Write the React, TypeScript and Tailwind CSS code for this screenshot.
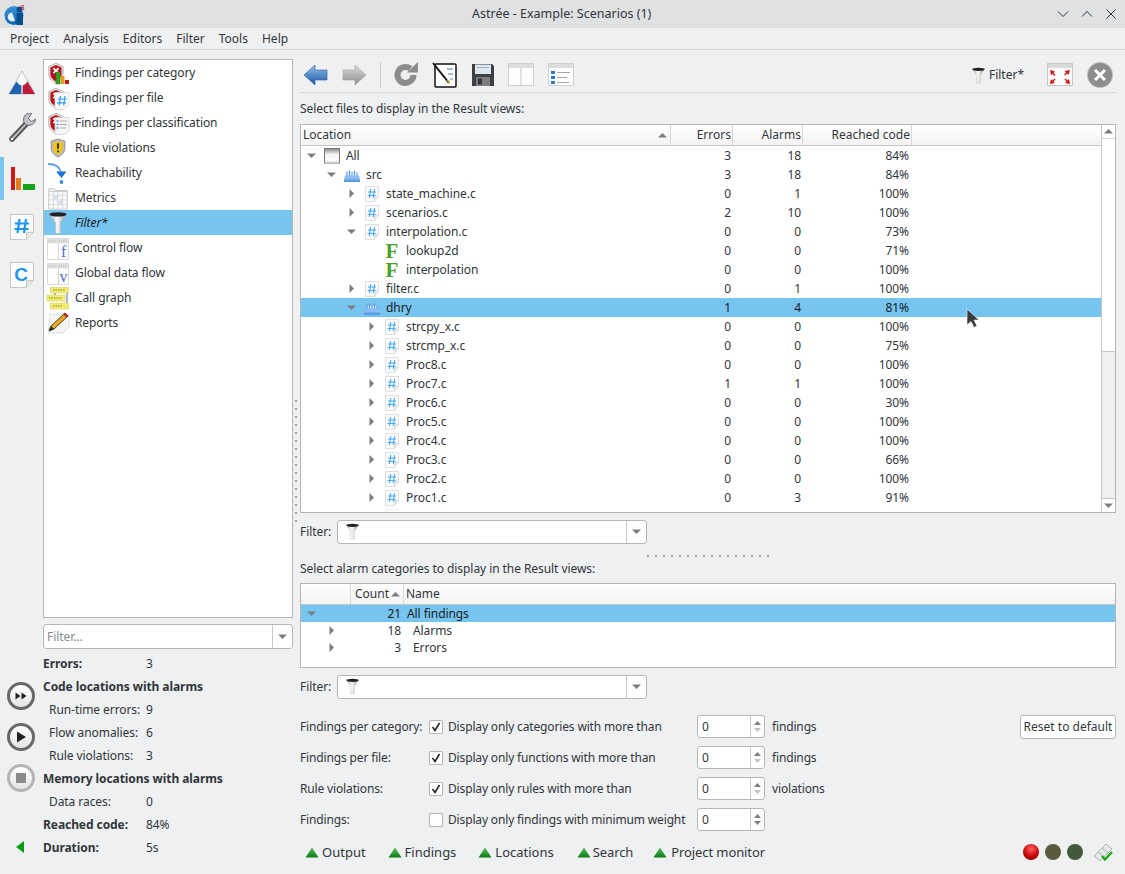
import React from "react";

const Tri = ({ d = "down", c = "#7b7e81" }: { d?: "down" | "right" | "up"; c?: string }) => (
  <svg width="9" height="9" viewBox="0 0 9 9" className="shrink-0">
    {d === "down" && <path d="M0 2.5h9L4.5 7z" fill={c} />}
    {d === "up" && <path d="M0 6.5h9L4.5 2z" fill={c} />}
    {d === "right" && <path d="M2.5 0v9L7 4.5z" fill={c} />}
  </svg>
);

const Funnel = ({ s = 24 }: { s?: number }) => (
  <svg width={s} height={s} viewBox="0 0 24 24">
    <defs>
      <linearGradient id="fn" x1="0" x2="1" y1="0" y2="0">
        <stop offset="0" stopColor="#a8aaaa" />
        <stop offset="0.45" stopColor="#fafafa" />
        <stop offset="1" stopColor="#8a8c8c" />
      </linearGradient>
    </defs>
    <path d="M3 2h18l-6.500 10v10.500h-5V12z" fill="url(#fn)" stroke="#b0b2b2" strokeWidth="0.500" />
    <ellipse cx="12" cy="3.400" rx="8.500" ry="2.200" fill="#222" />
  </svg>
);

const HashDoc = ({ s = 16, w = 1 }: { s?: number; w?: number }) => (
  <svg width={s} height={s} viewBox="0 0 16 16" className="shrink-0">
    <path d="M1.500.5h13v10l-4 5h-9z" fill="#fbfbfb" stroke="#dfe0e1" />
    <path d="M10.500 15.500v-5h4" fill="#e8e8e8" stroke="#d0d1d2" strokeWidth="0.700" />
    <path d="M6.800 3 5.400 12M10.600 3 9.200 12M4 6h8M3.600 9.400h8" stroke="#3aa5f5" strokeWidth={w} fill="none" />
  </svg>
);

const Folder = () => (
  <svg width="16" height="16" viewBox="0 0 16 16" className="shrink-0">
    <path d="M3 9V4.500M5.500 9V3.500M8 9V5M10.500 9V3.500M13 9V5.500" stroke="#4f96e4" strokeWidth="1.300" />
    <path d="M4.200 9V5.500M6.800 9V5.500M9.200 9V6M11.800 9V5.500" stroke="#e5f0fb" strokeWidth="1.100" />
    <path d="M1 8.500h14l1 4V15H0v-2.500z" fill="#8abcf0" />
    <rect x="0" y="12.500" width="16" height="2.500" fill="#5a9ce6" />
  </svg>
);

const WinIcon = () => (
  <svg width="16" height="16" viewBox="0 0 16 16" className="shrink-0">
    <defs>
      <linearGradient id="wi" x1="0" x2="0" y1="0" y2="1"><stop offset="0" stopColor="#85878a" /><stop offset="0.4" stopColor="#f4f4f4" /><stop offset="1" stopColor="#ffffff" /></linearGradient>
    </defs>
    <rect x="0.500" y="0.500" width="15" height="14.500" fill="url(#wi)" stroke="#77797b" />
    <rect x="1" y="13.500" width="14" height="1.500" fill="#cfd0d1" />
  </svg>
);

const FIcon = () => (
  <span className="flex h-[16px] w-[16px] shrink-0 items-center justify-center font-['Liberation_Serif',serif] text-[21px] font-bold leading-[16px] tracking-normal text-[#4aa02c]">F</span>
);

const Shield = () => (
  <g transform="translate(1.500 1) scale(1.300)">
    <path d="M1 3.500 6.500 1 12 3.500v6c0 3.200-2.500 5.400-5.500 7-3-1.600-5.500-3.800-5.500-7z" fill="#e6e7e7" stroke="#8f9090" strokeWidth="0.500" />
    <path d="M2.200 4.300 6.500 2.300l4.300 2v5.200c0 2.500-1.900 4.200-4.300 5.600-2.400-1.400-4.300-3.100-4.300-5.600z" fill="#bb1019" />
    <path d="M4.500 4.800 8.500 8.600M8.500 4.800 4.500 8.600" stroke="#fff" strokeWidth="1.400" />
  </g>
);

const ShieldBars = () => (
  <svg width="24" height="24" viewBox="0 0 24 24">
    <Shield />
    <rect x="10" y="11" width="4" height="12" fill="#35a024" stroke="#1d7014" strokeWidth="0.400" />
    <rect x="14.500" y="15" width="4" height="8" fill="#dca020" />
    <rect x="19" y="19" width="4" height="4" fill="#bf1a1a" />
  </svg>
);

const ShieldFile = () => (
  <svg width="24" height="24" viewBox="0 0 24 24">
    <Shield />
    <path d="M9 6.500h14v12l-5 5H9z" fill="#f8f8f8" stroke="#d6d7d8" strokeWidth="0.800" />
    <path d="M14.500 10 13.200 19.500M19 10 17.700 19.500M11.700 13h9M11 16.800h9" stroke="#2a9df4" strokeWidth="1.200" fill="none" />
  </svg>
);

const ShieldList = () => (
  <svg width="24" height="24" viewBox="0 0 24 24">
    <Shield />
    <path d="M9 6.500h14v13l-4 4H9z" fill="#f5f5f5" stroke="#cfd0d1" strokeWidth="0.800" />
    <path d="M14 10h7M14 13.500h7M14 17h6" stroke="#a9aaab" strokeWidth="1" />
    <path d="M10.500 10h2M10.500 13.500h2M10.500 17h2" stroke="#4f93d8" strokeWidth="1.600" />
  </svg>
);

const RuleShield = () => (
  <svg width="24" height="24" viewBox="-2 -2 28 28">
    <path d="M12 1.500 20 4v8c0 5-3.700 8.300-8 10.500C7.700 20.300 4 17 4 12V4z" fill="#bcbcbc" stroke="#6e6e6e" strokeWidth="0.800" />
    <path d="M12 4l5.600 1.800V12c0 3.600-2.600 6-5.600 7.800-3-1.800-5.600-4.200-5.600-7.800V5.800z" fill="#f2c416" />
    <path d="M12 6.500v6.500M12 15v2" stroke="#222" strokeWidth="2" />
  </svg>
);

const Reach = () => (
  <svg width="24" height="24" viewBox="0 0 24 24">
    <path d="M2 3c7 0 12 3 13 9" stroke="#5aa0ee" strokeWidth="1.800" fill="none" />
    <path d="M10 10.500h10.500L15.500 17z" fill="#1f6fd6" />
    <circle cx="15.500" cy="21" r="1.900" fill="#3e8ee8" />
  </svg>
);

const MetricIcon = () => (
  <svg width="24" height="24" viewBox="-1 -1 26 26">
    <path d="M2 2h6l1.500 2H22v20H2z" fill="#fafafa" stroke="#bcbdbe" />
    <path d="M3 9h18M3 14h18M3 19h18M7 5v18M12 5v18M17 5v18" stroke="#cfd0d1" strokeWidth="0.800" />
    <path d="M2.500 5h19" stroke="#c6c7c8" />
    <rect x="7.500" y="9.500" width="4" height="4" fill="#cfe0f3" />
    <rect x="12.500" y="14.500" width="4" height="4" fill="#cfe0f3" />
  </svg>
);

const FlowIcon = ({ l }: { l: string }) => (
  <svg width="24" height="24" viewBox="0 0 24 24" className="overflow-visible">
    <rect x="1.500" y="2.500" width="21" height="21" fill="#fdfdfd" stroke="#dcdcdd" />
    <rect x="2" y="3" width="20" height="4.500" fill="#dedfe0" />
    <path d="M3 5h7M13 5h8" stroke="#a8a9aa" strokeWidth="0.800" strokeDasharray="1 1" />
    <path d="M12.500 7.500v16" stroke="#d4d5d6" />
    <text x="17.500" y="21" textAnchor="middle" fontFamily="Liberation Serif, serif" fontSize="16" fill="#4e6fd0">{l}</text>
  </svg>
);

const CallGraph = () => (
  <svg width="24" height="24" viewBox="0 0 24 24">
    <path d="M9 7v6M21 5v13" stroke="#6f86c9" strokeWidth="1.200" />
    <rect x="4.500" y="1.500" width="18" height="5.500" fill="#f3ee6a" stroke="#c9c76a" strokeWidth="0.500" />
    <rect x="1" y="9" width="18" height="6" fill="#f3ee6a" stroke="#c9c76a" strokeWidth="0.500" />
    <rect x="4.500" y="17" width="18" height="6" fill="#f3ee6a" stroke="#c9c76a" strokeWidth="0.500" />
    <path d="M7 4h12M3 12h13M7 20h9" stroke="#7a7a4a" strokeWidth="1" strokeDasharray="1.500 1" />
  </svg>
);

const Pencil = () => (
  <svg width="24" height="24" viewBox="0 0 24 24">
    <path d="M4 3h19v13l-6 6H2z" fill="#f4f4f4" stroke="#d6d7d8" strokeWidth="0.800" />
    <path d="M19 2 22 5 8 18l-5 2 2-5z" fill="#e7a81d" stroke="#222" strokeWidth="0.800" />
    <path d="M19 2 22 5 20.500 6.500 17.500 3.500z" fill="#cf1f1f" />
    <path d="M5 15 8 18l-5 2z" fill="#2a2a2a" />
  </svg>
);

const RailTriangle = () => (
  <svg width="28" height="26" viewBox="0 0 28 26">
    <path d="M14 1 27 24H1z" fill="#fdfdfd" stroke="#9c9d9e" strokeWidth="0.600" />
    <path d="M8.500 11.500C10 14 12 15 13.400 15.400V24H1z" fill="#1f63ae" />
    <path d="M19.500 11.500C18 14 16 15 14.600 15.400V24H27z" fill="#bd1f3a" />
  </svg>
);

const Wrench = () => (
  <svg width="28" height="30" viewBox="0 0 28 30">
    <path d="M4 26 19 10" stroke="#4f5052" strokeWidth="5.500" strokeLinecap="round" />
    <path d="M4 26 19 10" stroke="#b9babb" strokeWidth="2" strokeLinecap="round" />
    <path d="M22 0c-5 .5-7.500 4.500-6 9.500l2.500 2.500c5 1.500 8.500-1.500 9.500-6l-4.500 2.500-3-3 3-5z" fill="#c2c3c4" stroke="#55565a" strokeWidth="0.800" />
    <circle cx="4" cy="26" r="1.300" fill="#fff" />
  </svg>
);

const RailBars = () => (
  <svg width="26" height="26" viewBox="0 0 26 26">
    <rect x="0" y="1" width="4" height="23" fill="#d21616" />
    <rect x="5" y="12" width="5" height="12" fill="#de7f1f" />
    <rect x="12" y="18" width="12" height="6" fill="#16a016" />
  </svg>
);

const RailDoc = ({ children }: { children: React.ReactNode }) => (
  <svg width="24" height="26" viewBox="0 0 24 26">
    <path d="M.5.5h23v18l-7 7H.500z" fill="#fcfcfc" stroke="#c7c8c9" />
    <path d="M16.500 25.500v-7h7" fill="#e8e8e8" stroke="#c7c8c9" />
    {children}
  </svg>
);

const Round = ({ kind }: { kind: "ff" | "play" | "stop" }) => (
  <div className={"flex h-[28px] w-[28px] items-center justify-center rounded-full border-[3px] bg-gradient-to-b from-white to-[#e4e4e4] " + (kind === "stop" ? "border-[#b4b5b6]" : "border-[#67686a]")}>
    <svg width="14" height="14" viewBox="0 0 14 14">
      {kind === "ff" && <path d="M1.500 3.500v7L6.500 7zM7.500 3.500v7l5-3.500z" fill="#222" />}
      {kind === "play" && <path d="M3 1.500v11L12 7z" fill="#222" />}
      {kind === "stop" && <rect x="2" y="2" width="10" height="10" fill="#8a8b8c" />}
    </svg>
  </div>
);

const navItems: [string, React.ReactNode][] = [
  ["Findings per category", <ShieldBars />],
  ["Findings per file", <ShieldFile />],
  ["Findings per classification", <ShieldList />],
  ["Rule violations", <RuleShield />],
  ["Reachability", <Reach />],
  ["Metrics", <MetricIcon />],
  ["Filter*", <Funnel />],
  ["Control flow", <FlowIcon l="f" />],
  ["Global data flow", <FlowIcon l="v" />],
  ["Call graph", <CallGraph />],
  ["Reports", <Pencil />],
];

type Row = { d: number; a?: "down" | "right"; i: "win" | "dir" | "hash" | "f"; n: string; e?: string; al?: string; r?: string; sel?: boolean };

const rows: Row[] = [
  { d: 0, a: "down", i: "win", n: "All", e: "3", al: "18", r: "84%" },
  { d: 1, a: "down", i: "dir", n: "src", e: "3", al: "18", r: "84%" },
  { d: 2, a: "right", i: "hash", n: "state_machine.c", e: "0", al: "1", r: "100%" },
  { d: 2, a: "right", i: "hash", n: "scenarios.c", e: "2", al: "10", r: "100%" },
  { d: 2, a: "down", i: "hash", n: "interpolation.c", e: "0", al: "0", r: "73%" },
  { d: 3, i: "f", n: "lookup2d", e: "0", al: "0", r: "71%" },
  { d: 3, i: "f", n: "interpolation", e: "0", al: "0", r: "100%" },
  { d: 2, a: "right", i: "hash", n: "filter.c", e: "0", al: "1", r: "100%" },
  { d: 2, a: "down", i: "dir", n: "dhry", e: "1", al: "4", r: "81%", sel: true },
  { d: 3, a: "right", i: "hash", n: "strcpy_x.c", e: "0", al: "0", r: "100%" },
  { d: 3, a: "right", i: "hash", n: "strcmp_x.c", e: "0", al: "0", r: "75%" },
  { d: 3, a: "right", i: "hash", n: "Proc8.c", e: "0", al: "0", r: "100%" },
  { d: 3, a: "right", i: "hash", n: "Proc7.c", e: "1", al: "1", r: "100%" },
  { d: 3, a: "right", i: "hash", n: "Proc6.c", e: "0", al: "0", r: "30%" },
  { d: 3, a: "right", i: "hash", n: "Proc5.c", e: "0", al: "0", r: "100%" },
  { d: 3, a: "right", i: "hash", n: "Proc4.c", e: "0", al: "0", r: "100%" },
  { d: 3, a: "right", i: "hash", n: "Proc3.c", e: "0", al: "0", r: "66%" },
  { d: 3, a: "right", i: "hash", n: "Proc2.c", e: "0", al: "0", r: "100%" },
  { d: 3, a: "right", i: "hash", n: "Proc1.c", e: "0", al: "3", r: "91%" },
];

const indent = ["pl-[6px]", "pl-[26px]", "pl-[46px]", "pl-[66px]"];

const Combo = () => (
  <div className="flex h-[24px] w-[310px] items-center rounded-[3px] border border-[#b4b6b8] bg-white">
    <div className="flex flex-1 items-center pl-[6px]"><Funnel s={17} /></div>
    <div className="flex h-full w-[20px] items-center justify-center border-l border-[#c8cacb]"><Tri /></div>
  </div>
);

const Spin = ({ dim }: { dim?: boolean }) => (
  <div className="flex h-[23px] w-[68px] items-center rounded-[3px] border border-[#b4b6b8] bg-white pl-[4px]">
    <span className="flex-1">0</span>
    <div className="flex h-full w-[14px] flex-col items-center justify-center border-l border-[#c8cacb]">
      <svg width="9" height="15" viewBox="0 0 9 15">
        <path d="M1 6 4.500 2 8 6z" fill="#7b7e81" />
        <path d="M1 9 4.500 13 8 9z" fill={dim ? "#c0c2c4" : "#7b7e81"} />
      </svg>
    </div>
  </div>
);

const Check = ({ on }: { on: boolean }) => (
  <div className="flex h-[14px] w-[14px] shrink-0 items-center justify-center rounded-[1px] border border-[#b4b6b8] bg-white">
    {on && (
      <svg width="10" height="10" viewBox="0 0 10 10"><path d="M1.500 5 4 8.500 8.500 1" stroke="#232629" strokeWidth="1.600" fill="none" /></svg>
    )}
  </div>
);

const FormRow = ({ label, on, text, suffix, last, dim }: { label: string; on: boolean; text: string; suffix?: string; last?: React.ReactNode; dim?: boolean }) => (
  <div className="flex h-[31px] items-center tracking-[-0.15px]">
    <span className="w-[129px]">{label}</span>
    <Check on={on} />
    <span className="ml-[5px] w-[249px]">{text}</span>
    <Spin dim={dim} />
    <span className="ml-[7px] flex-1">{suffix}</span>
    {last}
  </div>
);

const Up = () => (
  <svg width="14" height="11" viewBox="0 0 14 11" className="shrink-0">
    <defs>
      <linearGradient id="gu" x1="0" x2="0" y1="0" y2="1"><stop offset="0" stopColor="#58c058" /><stop offset="1" stopColor="#0c7a14" /></linearGradient>
    </defs>
    <path d="M7 0.500 13.500 10.500H.500z" fill="url(#gu)" />
  </svg>
);

const Dots = ({ v }: { v?: boolean }) => (
  <div className={v ? "flex flex-col gap-[6px]" : "flex gap-[6px]"}>
    {Array.from({ length: 16 }).map((_, i) => (
      <div key={i} className="h-[2px] w-[2px] bg-[#9a9c9e]" />
    ))}
  </div>
);

const Led = ({ c }: { c: string }) => <div className={"h-[16px] w-[16px] rounded-full " + c} />;

export default function App() {
  return (
    <div className="flex h-[874px] w-[1125px] flex-col overflow-hidden bg-[#eff0f1] font-['Noto_Sans',sans-serif] text-[12px] leading-none tracking-[-0.07px] text-[#31363b]">
      {/* title bar */}
      <div className="flex h-[28px] shrink-0 items-center bg-[#dfe1e3] pl-[4px] pr-[8px]">
        <svg width="22" height="22" viewBox="0 0 22 22">
          <defs>
            <linearGradient id="lg" x1="0" x2="0" y1="0" y2="1"><stop offset="0" stopColor="#3d93d8" /><stop offset="1" stopColor="#0f66b0" /></linearGradient>
          </defs>
          <circle cx="10" cy="12.500" r="9.500" fill="url(#lg)" />
          <path d="M8 9.500a4.500 4.500 0 1 0 3 8z" fill="#e8eef4" />
          <rect x="12.500" y="10" width="6.500" height="12" fill="#0a4d8c" />
          <circle cx="15.500" cy="6.500" r="3" fill="#0a4d8c" />
          <text x="18.500" y="6.500" textAnchor="middle" fontSize="7" fontWeight="700" fill="#c0392b" fontFamily="Liberation Sans, sans-serif">3</text>
        </svg>
        <span className="ml-[446px] text-[12.5px] tracking-normal">Astrée - Example: Scenarios (1)</span>
        <div className="ml-auto flex items-center gap-[12px]">
          <svg width="12" height="12" viewBox="0 0 12 12"><path d="M1 3.500 6 8.500l5-5" stroke="#31363b" fill="none" /></svg>
          <svg width="12" height="12" viewBox="0 0 12 12"><path d="M1 8.500 6 3.500l5 5" stroke="#31363b" fill="none" /></svg>
          <svg width="12" height="12" viewBox="0 0 12 12"><path d="M1.500 1.500l9 9M10.500 1.500l-9 9" stroke="#31363b" fill="none" /></svg>
        </div>
      </div>
      {/* menu */}
      <div className="flex h-[22px] shrink-0 items-center gap-[14px] border-b border-[#d5d7d9] pl-[10px] tracking-normal">
        {["Project", "Analysis", "Editors", "Filter", "Tools", "Help"].map((m) => <span key={m}>{m}</span>)}
      </div>
      <div className="flex min-h-0 flex-1">
        {/* left */}
        <div className="flex w-[293px] shrink-0 flex-col">
          <div className="flex h-[568px] pt-[9px]">
            <div className="flex w-[43px] shrink-0 flex-col">
              <div className="flex h-[48px] items-center justify-center"><RailTriangle /></div>
              <div className="flex h-[42px] items-center justify-center"><Wrench /></div>
              <div className="mt-[8px] flex h-[43px] items-center border-l-[4px] border-[#75c5f0] pl-[7px]"><RailBars /></div>
              <div className="flex h-[54px] items-center justify-center"><RailDoc><path d="M9.500 5 7.500 19M16 5 14 19M5 9.500h14M4.500 15h14" stroke="#1f95f2" strokeWidth="2.200" fill="none" /></RailDoc></div>
              <div className="flex h-[42px] items-center justify-center"><RailDoc><text x="11" y="19" textAnchor="middle" fontSize="19" fontWeight="700" fill="#1f95f2" fontFamily="Liberation Sans, sans-serif">C</text></RailDoc></div>
            </div>
            <div className="h-[559px] w-[250px] border border-[#b4b6b8] bg-white tracking-[-0.1px]">
              {navItems.map(([n, icon]) => (
                <div key={n} className={"flex h-[25px] items-center " + (n === "Filter*" ? "bg-[#75c5f0] italic text-[#1a1a1a]" : "")}>
                  <div className="ml-[2px] mr-[5px] flex h-[24px] w-[24px] items-center justify-center">{icon}</div>
                  <span>{n}</span>
                </div>
              ))}
            </div>
          </div>
          <div className="flex flex-1">
            <div className="flex w-[43px] shrink-0 flex-col items-start pl-[7px]">
              <div className="mt-[64px]"><Round kind="ff" /></div>
              <div className="mt-[13px]"><Round kind="play" /></div>
              <div className="mt-[13px]"><Round kind="stop" /></div>
              <svg width="10" height="14" viewBox="0 0 10 14" className="ml-[8px] mt-[48px]"><path d="M9 1v12L1 7z" fill="#0f9a14" /></svg>
            </div>
            <div className="w-[250px]">
              <div className="mt-[6px] flex h-[25px] items-center rounded-[3px] border border-[#b4b6b8] bg-white">
                <span className="flex-1 pl-[3px] text-[#7f8c8d]">Filter...</span>
                <div className="flex h-full w-[20px] items-center justify-center border-l border-[#c8cacb]"><Tri /></div>
              </div>
              <div className="mt-[3px] grid grid-cols-[103px_1fr] auto-rows-[23px] items-center">
                <b className="font-bold">Errors:</b><span>3</span>
                <b className="col-span-2 font-bold">Code locations with alarms</b>
                <span className="pl-[6px]">Run-time errors:</span><span>9</span>
                <span className="pl-[6px]">Flow anomalies:</span><span>6</span>
                <span className="pl-[6px]">Rule violations:</span><span>3</span>
                <b className="col-span-2 font-bold">Memory locations with alarms</b>
                <span className="pl-[6px]">Data races:</span><span>0</span>
                <b className="font-bold">Reached code:</b><span>84%</span>
                <b className="font-bold">Duration:</b><span>5s</span>
              </div>
            </div>
          </div>
        </div>
        {/* vertical splitter */}
        <div className="flex w-[7px] shrink-0 flex-col items-center justify-center pb-[2px] pr-[1px]">
          <Dots v />
        </div>
        {/* right */}
        <div className="flex w-[816px] shrink-0 flex-col">
          {/* toolbar */}
          <div className="flex h-[43px] shrink-0 items-center border-b border-[#d5d7d9] pt-[8px]">
            <svg width="26" height="22" viewBox="0 0 26 22" className="ml-[3px]">
              <defs><linearGradient id="bk" x1="0" x2="0" y1="0" y2="1"><stop offset="0" stopColor="#8fbfe8" /><stop offset="1" stopColor="#1b5aa5" /></linearGradient></defs>
              <path d="M1 11 12 1v5h12v10H12v5z" fill="url(#bk)" stroke="#2a5f9e" strokeWidth="0.600" />
            </svg>
            <svg width="26" height="22" viewBox="0 0 26 22" className="ml-[12px]">
              <defs><linearGradient id="fw" x1="0" x2="0" y1="0" y2="1"><stop offset="0" stopColor="#dcdcdc" /><stop offset="1" stopColor="#8d8d8d" /></linearGradient></defs>
              <path d="M25 11 14 1v5H2v10h12v5z" fill="url(#fw)" stroke="#a0a0a0" strokeWidth="0.600" />
            </svg>
            <div className="ml-[13px] h-[26px] w-px bg-[#c8cacb]" />
            <svg width="26" height="26" viewBox="0 0 26 26" className="ml-[12px]">
              <path d="M20.500 13a8 8 0 1 1-3-6.300" stroke="#8b8c8d" strokeWidth="6" fill="none" />
              <path d="M14 10.500h11V0z" fill="#8b8c8d" />
            </svg>
            <svg width="26" height="26" viewBox="0 0 26 26" className="ml-[13px]">
              <rect x="3" y="2" width="21" height="23" rx="1" fill="#fff" stroke="#111" strokeWidth="1.500" />
              <path d="M15 7h6M16 12h5M18 17h3" stroke="#3f80c4" strokeWidth="1.200" />
              <path d="M1 1l16 20" stroke="#111" strokeWidth="2" />
              <path d="M15 18l2 3 1-1z" fill="#d9a21b" stroke="#d9a21b" />
            </svg>
            <svg width="24" height="24" viewBox="0 0 24 24" className="ml-[13px]">
              <path d="M1 1h20l2 2v20H1z" fill="#3e4045" />
              <rect x="4" y="1.500" width="16" height="9.500" fill="#dce6ef" />
              <path d="M6 4.500h12" stroke="#9db3c6" />
              <rect x="5" y="14" width="14" height="9" fill="#7b7d80" />
              <rect x="7" y="15.500" width="4" height="6" fill="#33353a" />
            </svg>
            <svg width="26" height="24" viewBox="0 0 26 24" className="ml-[13px]">
              <rect x="0.500" y="0.500" width="25" height="22" fill="#fdfdfd" stroke="#cfd0d1" />
              <rect x="1" y="1" width="24" height="4" fill="#dcdddd" />
              <path d="M13 5v18" stroke="#c6c7c8" />
            </svg>
            <svg width="26" height="24" viewBox="0 0 26 24" className="ml-[14px]">
              <rect x="0.500" y="0.500" width="25" height="22" fill="#fdfdfd" stroke="#cfd0d1" />
              <rect x="1" y="1" width="24" height="4" fill="#dcdddd" />
              <path d="M3 8h4v3H3zM3 13h4v3H3zM3 18h4v3H3z" fill="#2c78cf" />
              <path d="M9 9.500h13M9 14.500h10M9 19.500h12" stroke="#a5a6a7" />
            </svg>
            <div className="flex-1" />
            <Funnel s={17} />
            <span className="ml-[2px] tracking-normal">Filter*</span>
            <svg width="26" height="24" viewBox="0 0 26 24" className="ml-[23px]">
              <rect x="0.500" y="0.500" width="25" height="22" fill="#fdfdfd" stroke="#c6c7c8" />
              <rect x="1" y="1" width="24" height="4" fill="#d8d9d9" />
              <path d="M3 7l5 1.500-1.500 1.500 2 2-1 1-2-2L4 12zM23 7l-1.500 5-1.500-1.500-2 2-1-1 2-2L17.500 8zM3 21l1-5 1.500 1.500 2-2 1 1-2 2L8 20zM23 21l-5-1 1.500-1.500-2-2 1-1 2 2L22 16z" fill="#d41818" />
            </svg>
            <div className="ml-[15px] mr-[4px] flex h-[24px] w-[24px] items-center justify-center rounded-full bg-[#8c8d8e] ring-1 ring-[#bbbcbd]">
              <svg width="14" height="14" viewBox="0 0 14 14"><path d="M2 2l10 10M12 2 2 12" stroke="#fff" strokeWidth="3" /></svg>
            </div>
          </div>
          <div className="flex h-[31px] shrink-0 items-center">Select files to display in the Result views:</div>
          {/* tree */}
          <div className="flex h-[389px] shrink-0 border border-[#b4b6b8] bg-white">
            <div className="flex min-w-0 flex-1 flex-col">
              <div className="flex h-[21px] shrink-0 items-center border-b border-[#c4c6c8] bg-gradient-to-b from-white to-[#f3f3f4] tracking-normal">
                <div className="flex h-full w-[370px] items-center justify-between border-r border-[#d5d7d9] pl-[2px] pr-[3px]">Location<Tri d="up" /></div>
                <div className="flex h-full w-[62px] items-center justify-end border-r border-[#d5d7d9] pr-[1px]">Errors</div>
                <div className="flex h-full w-[70px] items-center justify-end border-r border-[#d5d7d9] pr-[1px]">Alarms</div>
                <div className="flex h-full w-[109px] items-center justify-end border-r border-[#d5d7d9] pr-[1px]">Reached code</div>
              </div>
              <div className="min-h-0 flex-1 overflow-hidden">
                {rows.map((r) => (
                  <div key={r.n + r.d + r.r} className={"flex h-[19px] items-center " + (r.sel ? "bg-[#75c5f0] text-[#1a1a1a]" : "")}>
                    <div className={"flex h-full w-[370px] items-center " + indent[r.d]}>
                      <div className="flex w-[9px] justify-center">{r.a && <Tri d={r.a} />}</div>
                      <div className="ml-[8px] mr-[6px] flex w-[16px] justify-center">
                        {r.i === "win" && <WinIcon />}
                        {r.i === "dir" && <Folder />}
                        {r.i === "hash" && <HashDoc />}
                        {r.i === "f" && <FIcon />}
                      </div>
                      <span>{r.n}</span>
                    </div>
                    <div className="w-[62px] pr-[2px] text-right">{r.e}</div>
                    <div className="w-[70px] pr-[2px] text-right">{r.al}</div>
                    <div className="w-[108px] pr-[2px] text-right">{r.r}</div>
                  </div>
                ))}
                <div className="flex h-[19px] items-center pl-[66px]">
                  <div className="ml-[17px] flex w-[16px] justify-center opacity-40"><HashDoc /></div>
                </div>
              </div>
            </div>
            {/* scrollbar */}
            <div className="flex w-[14px] shrink-0 flex-col border-l border-[#c4c6c8]">
              <div className="flex h-[14px] items-center justify-center border-b border-[#d5d7d9]"><Tri d="up" /></div>
              <div className="h-[213px] border-b border-[#c4c6c8] bg-white" />
              <div className="flex-1 bg-[#f0f0f0]" />
              <div className="flex h-[14px] items-center justify-center border-t border-[#c4c6c8]"><Tri /></div>
            </div>
          </div>
          <div className="mt-[6px] flex h-[25px] shrink-0 items-center gap-[6px]">
            <span>Filter:</span>
            <Combo />
          </div>
          <div className="flex h-[18px] shrink-0 items-center justify-center pt-[6px]"><Dots /></div>
          <div className="flex h-[14px] shrink-0 items-center">Select alarm categories to display in the Result views:</div>
          {/* alarm table */}
          <div className="mt-[7px] h-[85px] shrink-0 border border-[#b4b6b8] bg-white">
            <div className="flex h-[21px] items-center border-b border-[#c4c6c8] bg-gradient-to-b from-white to-[#f3f3f4] tracking-normal">
              <div className="h-full w-[50px] border-r border-[#d5d7d9]" />
              <div className="flex h-full w-[53px] items-center justify-end gap-[2px] border-r border-[#d5d7d9] pr-[3px]">Count<Tri d="up" /></div>
              <div className="pl-[2px]">Name</div>
            </div>
            {[
              { c: "21", n: "All findings", a: "down" as const, pl: "pl-[6px]", tx: "pl-[6px]", sel: true },
              { c: "18", n: "Alarms", a: "right" as const, pl: "pl-[26px]", tx: "pl-[12px]" },
              { c: "3", n: "Errors", a: "right" as const, pl: "pl-[26px]", tx: "pl-[12px]" },
            ].map((r) => (
              <div key={r.n} className={"flex h-[17px] items-center " + (r.sel ? "bg-[#75c5f0] text-[#1a1a1a]" : "")}>
                <div className={"w-[50px] " + r.pl}><Tri d={r.a} /></div>
                <div className="w-[50px] text-right">{r.c}</div>
                <div className={r.tx}>{r.n}</div>
              </div>
            ))}
          </div>
          <div className="mt-[6px] flex h-[25px] shrink-0 items-center gap-[6px]">
            <span>Filter:</span>
            <Combo />
          </div>
          {/* form */}
          <div className="mt-[12px] shrink-0">
            <FormRow label="Findings per category:" on text="Display only categories with more than" suffix="findings" dim last={
              <button className="flex h-[24px] w-[96px] items-center justify-center rounded-[3px] border border-[#b4b6b8] bg-white tracking-normal">Reset to default</button>
            } />
            <FormRow label="Findings per file:" on text="Display only functions with more than" suffix="findings" dim />
            <FormRow label="Rule violations:" on text="Display only rules with more than" suffix="violations" dim />
            <FormRow label="Findings:" on={false} text="Display only findings with minimum weight" />
          </div>
          {/* bottom */}
          <div className="mt-[2px] flex h-[30px] shrink-0 items-center pl-[5px] text-[13px] tracking-normal">
            <Up /><span className="ml-[3px]">Output</span>
            <div className="ml-[22px]"><Up /></div><span className="ml-[3px]">Findings</span>
            <div className="ml-[22px]"><Up /></div><span className="ml-[3px]">Locations</span>
            <div className="ml-[23px]"><Up /></div><span className="ml-[2px] tracking-[-0.1px]">Search</span>
            <div className="ml-[20px]"><Up /></div><span className="ml-[4px] tracking-[-0.1px]">Project monitor</span>
            <div className="flex-1" />
            <div className="flex items-center gap-[6px]">
              <Led c="bg-[radial-gradient(circle_at_50%_30%,#ff6060,#c00000_60%,#800000)]" />
              <Led c="bg-[#5c5a3c]" />
              <Led c="bg-[#43593c]" />
            </div>
            <svg width="22" height="20" viewBox="0 0 22 20" className="ml-[9px] mr-[2px]">
              <path d="M2 14 14 2l6 5L8 19z" fill="#e6e7e8" stroke="#aeb0b2" />
              <path d="M6 10l6 5M10 6l6 5" stroke="#aeb0b2" />
              <path d="M10 14l3 3.500L20 10" stroke="#13a813" strokeWidth="2.200" fill="none" />
            </svg>
          </div>
        </div>
      </div>
      {/* cursor */}
      <svg width="14" height="20" viewBox="0 0 14 20" className="pointer-events-none absolute left-[966px] top-[309px]">
        <path d="M1 0v16l4-3.500 3 6 3-1.500-3-6h5z" fill="#3a3d40" stroke="#fff" strokeWidth="0.600" />
      </svg>
    </div>
  );
}
